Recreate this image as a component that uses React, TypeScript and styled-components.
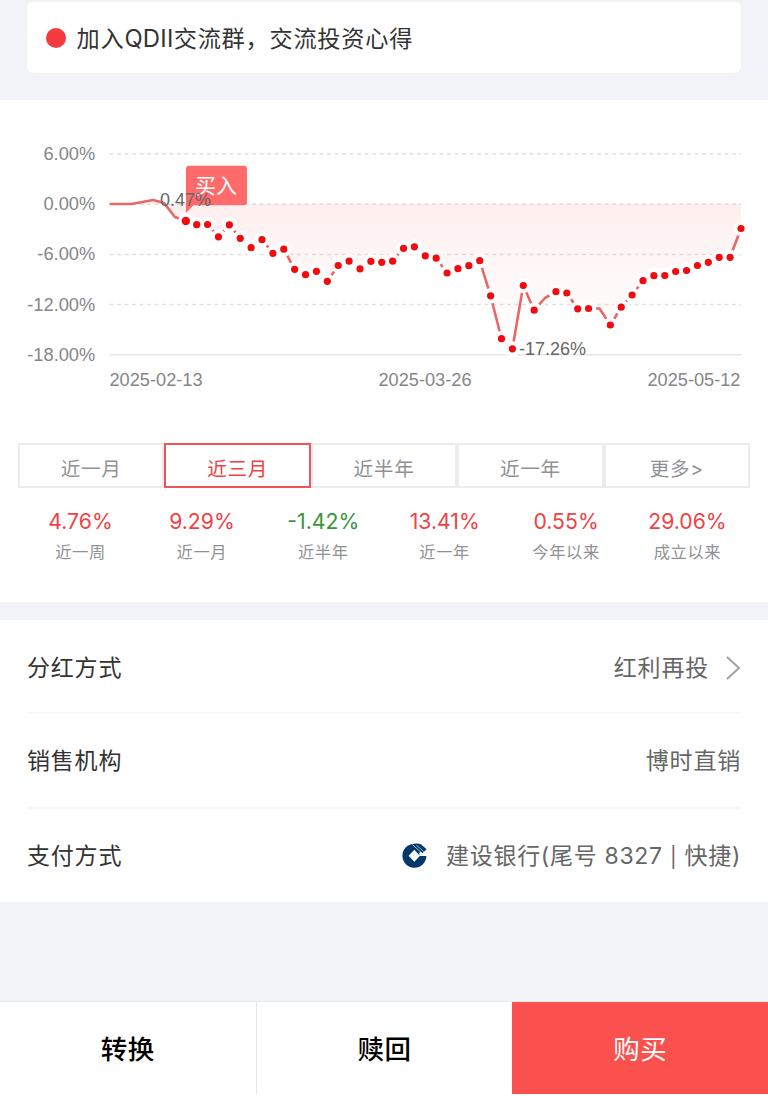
import React from 'react';
import styled, { createGlobalStyle } from 'styled-components';

const GlobalStyle = createGlobalStyle`
  * { box-sizing: border-box; }
  body {
    margin: 0;
    background: #fff;
    font-family: Inter, "Noto Sans CJK SC", sans-serif;
    color: #333;
  }
`;

const Page = styled.main`
  width: 768px;
  height: 1113px;
  display: flex;
  flex-direction: column;
  background: #fff;
  overflow: hidden;
`;

const NoticeArea = styled.section`
  height: 100px;
  flex: none;
  padding: 2px 27px 27px;
  background: #f2f3f8;
`;

const NoticeCard = styled.div`
  height: 71px;
  border-radius: 6px;
  background: #fff;
  display: flex;
  align-items: center;
  padding: 0 20px 0 19px;
  gap: 10.5px;
`;

const RedDot = styled.span`
  width: 20px;
  height: 20px;
  border-radius: 50%;
  background: #f33b3d;
`;

const NoticeText = styled.span`
  padding-top: 2px;
  font-size: 23.2px;
  letter-spacing: 0.75px;
  line-height: 34px;
  white-space: nowrap;
`;

const LatinRun = styled.span`
  font-size: 23.8px;
  letter-spacing: 0.3px;
`;

const ChartSvg = styled.svg`
  display: block;
  flex: none;
  font-family: "Liberation Sans", "Noto Sans CJK SC", sans-serif;
`;

const Tabs = styled.div`
  display: flex;
  flex: none;
  height: 45px;
  margin: 0 18px;
`;

const Tab = styled.button<{ $active?: boolean }>`
  flex: 1;
  padding: 6px 0 0;
  background: #fff;
  border: 2px solid ${(p) => (p.$active ? '#ee5558' : '#ebebf0')};
  color: ${(p) => (p.$active ? '#ee4245' : '#919195')};
  font-family: inherit;
  font-size: 19.6px;
  letter-spacing: 0.7px;
  line-height: 30px;
`;

const Returns = styled.div`
  display: grid;
  grid-template-columns: repeat(6, 121.4px);
  justify-content: center;
  flex: none;
  height: 114px;
  padding-top: 19px;
  text-align: center;
`;

const ReturnItem = styled.div``;

const ReturnValue = styled.div<{ $down?: boolean }>`
  color: ${(p) => (p.$down ? '#38963a' : '#f14144')};
  font-size: 21.2px;
  line-height: 28px;
`;

const ReturnLabel = styled.div`
  margin-top: 5px;
  color: #919195;
  font-size: 16.3px;
  letter-spacing: 0.6px;
  line-height: 24px;
`;

const Divider = styled.div`
  flex: none;
  height: 18px;
  background: #f2f3f8;
`;

const Details = styled.section`
  flex: none;
  height: 281.5px;
  padding: 0 27px;
`;

const DetailRow = styled.div`
  height: 95px;
  display: flex;
  align-items: center;
  justify-content: space-between;
  font-size: 23px;
  letter-spacing: 0.8px;
  line-height: 34px;
  & + & {
    border-top: 2px solid #f8f8f9;
    padding-top: 1px;
  }
  &:first-child {
    height: 92px;
    padding-top: 3px;
  }
`;

const DetailValue = styled.span`
  display: flex;
  align-items: center;
  color: #666;
  white-space: pre;
`;

const Account = styled.span`
  letter-spacing: 0.7px;
  padding-top: 1px;
`;

const Bar = styled.span`
  font-size: 20px;
`;

const Chevron = styled.svg`
  margin-left: 16px;
`;

const BankLogo = styled.svg`
  margin-right: 18.5px;
`;

const Spacer = styled.div`
  flex: none;
  height: 99.5px;
  background: #f2f3f8;
`;

const ActionBar = styled.footer`
  flex: none;
  display: flex;
  height: 93px;
  border-top: 1px solid #ececec;
`;

const Action = styled.button<{ $primary?: boolean; $divided?: boolean }>`
  flex: 1;
  padding: 0 0 1px;
  border: 0;
  border-right: ${(p) => (p.$divided ? '1px solid #e6e8e8' : '0')};
  background: ${(p) => (p.$primary ? '#fa514f' : '#fff')};
  color: ${(p) => (p.$primary ? '#fff' : '#000')};
  font-family: inherit;
  font-size: 26.5px;
  letter-spacing: 0.5px;
  font-weight: ${(p) => (p.$primary ? 400 : 500)};
`;

const START_X = 109.6;
const STEP = 10.886;
const FIRST_MARKER = 7;
const UNMARKED = [40, 45];

const levels = [
  204, 204, 204, 202, 200, 203, 217,
  221, 224.7, 224.5, 236.8, 224.8, 238.3, 247.7,
  239.7, 253.3, 249.2, 269.3, 274.7, 271.3, 281.3, 265.5, 261.2, 268.8, 261.3, 262.3,
  261.2, 248.3, 246.8, 255.8, 258.2, 273, 268.7, 265.7, 260.7, 295.8, 338.7, 348.8,
  285.5, 310.2, 298, 291.7, 293, 308.8, 308.5, 308.5, 325, 307.2, 295, 280.7, 275.7,
  275.5, 271.5, 270.5, 265.5, 262.3, 257.3, 257.3, 228.5,
];

const points = levels.map((y, i) => ({ x: START_X + i * STEP, y, i }));
const markers = points.filter((p) => p.i >= FIRST_MARKER && !UNMARKED.includes(p.i));
const linePoints = points.map((p) => `${p.x},${p.y}`).join(' ');
const areaPoints = `${START_X},204 ${linePoints} 741,204`;

const gridLines = [
  { y: 153.7, label: '6.00%' },
  { y: 204.2, label: '0.00%' },
  { y: 254.4, label: '-6.00%' },
  { y: 304.6, label: '-12.00%' },
  { y: 354.7, label: '-18.00%' },
];

const Chart = () => (
  <ChartSvg width="768" height="343" viewBox="0 100 768 343">
    <defs>
      <linearGradient id="area" gradientUnits="userSpaceOnUse" x1="0" y1="204" x2="0" y2="349">
        <stop offset="0" stopColor="#f0504a" stopOpacity="0.09" />
        <stop offset="0.45" stopColor="#f0504a" stopOpacity="0.045" />
        <stop offset="1" stopColor="#f0504a" stopOpacity="0" />
      </linearGradient>
    </defs>
    {gridLines.map((g, i) => (
      <g key={g.label}>
        <line
          x1="109.5" x2="741" y1={g.y} y2={g.y}
          stroke={i === 4 ? '#e6e6e6' : '#e3e1e3'} strokeWidth="1.5"
          strokeDasharray={i === 4 ? undefined : '4 3.5'}
        />
        <text x="95.3" y={g.y + 6} textAnchor="end" fontSize="18.3" fill="#86868a">{g.label}</text>
      </g>
    ))}
    <polygon points={areaPoints} fill="url(#area)" />
    <polyline points={linePoints} fill="none" stroke="#e86868" strokeWidth="2.6" strokeLinejoin="round" />
    {markers.map((p) => <circle key={p.i} cx={p.x} cy={p.y} r="7.6" fill="#fff" />)}
    <path d="M189 165.7h55q3 0 3 3v33.5q0 3-3 3h-50.5l-7.5 7.5v-44q0-3 3-3z" fill="#ff6b6b" />
    {markers.map((p) => (
      <circle key={p.i} cx={p.x} cy={p.y} r={p.i === FIRST_MARKER ? 4.2 : 3.6} fill="#f20a0e" />
    ))}
    <text x="195" y="192.5" fontSize="21" fill="#fff">买入</text>
    <text x="160" y="206" fontSize="18" fill="#666">0.47%</text>
    <text x="519" y="355" fontSize="18" fill="#666">-17.26%</text>
    <g fontSize="18.2" fill="#86868a">
      <text x="109.5" y="386">2025-02-13</text>
      <text x="425" y="386" textAnchor="middle">2025-03-26</text>
      <text x="740.5" y="386" textAnchor="end">2025-05-12</text>
    </g>
  </ChartSvg>
);

const tabs = ['近一月', '近三月', '近半年', '近一年', '更多>'];

const returns = [
  { value: '4.76%', label: '近一周' },
  { value: '9.29%', label: '近一月' },
  { value: '-1.42%', label: '近半年', down: true },
  { value: '13.41%', label: '近一年' },
  { value: '0.55%', label: '今年以来' },
  { value: '29.06%', label: '成立以来' },
];

export default function App() {
  return (
    <Page>
      <GlobalStyle />
      <NoticeArea>
        <NoticeCard>
          <RedDot />
          <NoticeText>加入<LatinRun>QDII</LatinRun>交流群，交流投资心得</NoticeText>
        </NoticeCard>
      </NoticeArea>
      <Chart />
      <Tabs>
        {tabs.map((t, i) => <Tab key={t} $active={i === 1}>{t}</Tab>)}
      </Tabs>
      <Returns>
        {returns.map((r) => (
          <ReturnItem key={r.label}>
            <ReturnValue $down={r.down}>{r.value}</ReturnValue>
            <ReturnLabel>{r.label}</ReturnLabel>
          </ReturnItem>
        ))}
      </Returns>
      <Divider />
      <Details>
        <DetailRow>
          <span>分红方式</span>
          <DetailValue>
            红利再投
            <Chevron width="16" height="26" viewBox="0 0 16 26" fill="none" stroke="#a2a2a6" strokeWidth="2">
              <path d="M2 2l12 11L2 24" />
            </Chevron>
          </DetailValue>
        </DetailRow>
        <DetailRow>
          <span>销售机构</span>
          <DetailValue>博时直销</DetailValue>
        </DetailRow>
        <DetailRow>
          <span>支付方式</span>
          <DetailValue>
            <BankLogo width="26" height="26" viewBox="0 0 26 26">
              <circle cx="12.4" cy="12.8" r="12" fill="#03386b" />
              <path d="M17.4 9.8L22 5.5L26 5V13H17.4z" fill="#fff" />
              <path d="M12.3 6.8l5.7 6-5.7 6-5.7-6z" fill="#fff" />
              <path d="M11.4 1Q15.5 0 19.2 1.5L24.6 6.2L20.4 10.2L11 1.8z" fill="#03386b" />
              <path d="M10.4 1.6L20.4 10.6" stroke="#fff" strokeWidth="0.7" />
              <path d="M14.4 2.2L22 8.8" stroke="#fff" strokeWidth="0.6" />
            </BankLogo>
            <Account>建设银行(尾号 8327 <Bar>|</Bar> 快捷)</Account>
          </DetailValue>
        </DetailRow>
      </Details>
      <Spacer />
      <ActionBar>
        <Action $divided>转换</Action>
        <Action>赎回</Action>
        <Action $primary>购买</Action>
      </ActionBar>
    </Page>
  );
}
